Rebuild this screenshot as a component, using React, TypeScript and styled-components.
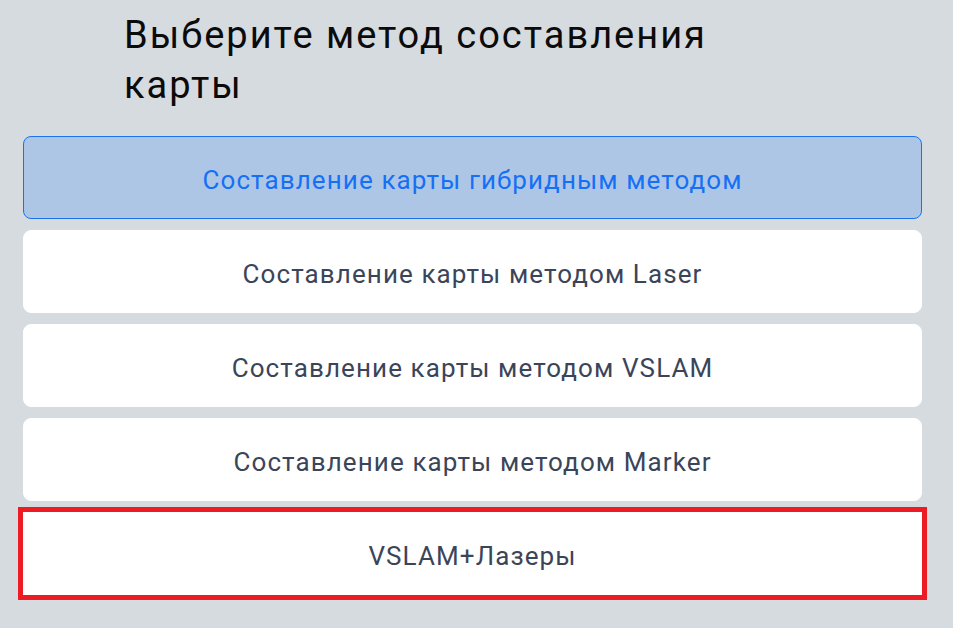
import React from "react";
import styled, { createGlobalStyle } from "styled-components";

const GlobalStyle = createGlobalStyle`
  html, body {
    margin: 0;
    padding: 0;
    background: #d6dbdf;
  }
  body {
    font-family: Roboto, "Noto Sans", Arial, sans-serif;
  }
`;

const Page = styled.div`
  width: 953px;
  height: 628px;
  background: #d6dbdf;
  box-sizing: border-box;
  padding: 10px 31px 0 23px;
  display: flex;
  flex-direction: column;
  overflow: hidden;
`;

const Title = styled.h1`
  margin: 0 0 0 101px;
  max-width: 620px;
  font-size: 38px;
  font-weight: 400;
  line-height: 50px;
  color: #0b0b0b;
  letter-spacing: 2px;
`;

const List = styled.div`
  margin-top: 26px;
  display: flex;
  flex-direction: column;
  gap: 11px;
`;

const Option = styled.button<{ $active?: boolean; $highlight?: boolean }>`
  height: 83px;
  box-sizing: border-box;
  width: 100%;
  display: flex;
  align-items: center;
  justify-content: center;
  font-family: Roboto, "Noto Sans", Arial, sans-serif;
  font-size: 26px;
  font-weight: 400;
  letter-spacing: 1.1px;
  cursor: pointer;
  padding: 4px 0 0;
  border-radius: ${(p) => (p.$highlight ? "0" : "8px")};
  border: 1px solid ${(p) => (p.$active ? "#1a73e8" : "#ffffff")};
  background: ${(p) => (p.$active ? "#adc6e5" : "#ffffff")};
  color: ${(p) => (p.$active ? "#1570f5" : "#3b4559")};
  outline: ${(p) => (p.$highlight ? "5px solid #ed1c24" : "none")};
`;

const options = [
  { label: "Составление карты гибридным методом", active: true },
  { label: "Составление карты методом Laser" },
  { label: "Составление карты методом VSLAM" },
  { label: "Составление карты методом Marker" },
  { label: "VSLAM+Лазеры", highlight: true },
];

export default function App() {
  return (
    <>
      <GlobalStyle />
      <Page>
        <Title>Выберите метод составления карты</Title>
        <List>
          {options.map((o) => (
            <Option key={o.label} $active={o.active} $highlight={o.highlight}>
              {o.label}
            </Option>
          ))}
        </List>
      </Page>
    </>
  );
}
